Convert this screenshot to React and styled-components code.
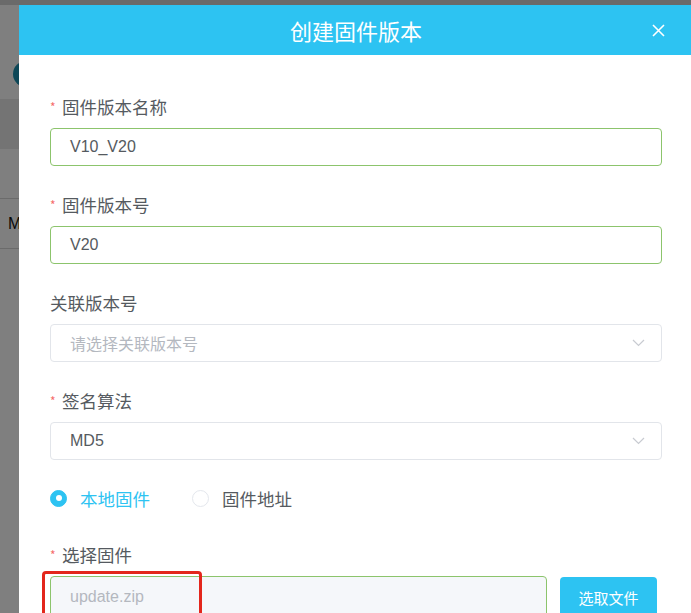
import React from "react";
import styled, { createGlobalStyle } from "styled-components";

const color = {
  blue: "#2dc3f2",
  text: "#555a60",
  muted: "#c0c4cc",
  green: "#8cc46c",
  line: "#e2e5ea",
  red: "#f56c6c",
};

const GlobalStyle = createGlobalStyle`
  html, body {
    margin: 0;
    padding: 0;
    overflow: hidden;
  }
  body {
    font-family: "Liberation Sans", "Noto Sans CJK SC", sans-serif;
  }
`;

const Page = styled.div`
  position: relative;
  width: 691px;
  height: 613px;
  overflow: hidden;
  background: #fff;
`;

/* the list page behind the dialog */
const BgTop = styled.div`
  height: 5px;
  background: #d4d4d4;
`;

const BgToolbar = styled.div`
  height: 50px;
  margin-top: 43px;
  border-top: 1px solid #ffffff;
  display: flex;
  align-items: center;
  padding-left: 13px;
`;

const BgAvatar = styled.div`
  width: 26px;
  height: 26px;
  border-radius: 50%;
  background: #1a8fae;
`;

const BgTableHead = styled.div`
  height: 50px;
  background: #e8e8e8;
`;

const BgRow = styled.div`
  height: 49px;
  border-bottom: 1px solid #d6d6d6;
  display: flex;
  align-items: center;
  padding-left: 8px;
  font-size: 16px;
  color: #111;
`;

const Overlay = styled.div`
  position: absolute;
  inset: 0;
  background: rgba(0, 0, 0, 0.5);
`;

const Modal = styled.div`
  position: absolute;
  left: 19px;
  top: 5px;
  width: 674px;
  height: 640px;
  background: #fff;
  font-family: "Liberation Sans", "Noto Sans CJK SC", sans-serif;
`;

const Header = styled.div`
  position: relative;
  height: 50px;
  background: ${color.blue};
  display: flex;
  align-items: center;
  justify-content: center;
`;

const Title = styled.h3`
  margin: 0;
  font-size: 22px;
  font-weight: 400;
  color: #fff;
  font-family: "Noto Sans CJK SC", sans-serif;
`;

const CloseButton = styled.button`
  position: absolute;
  right: 27px;
  top: 17px;
  width: 16px;
  height: 16px;
  padding: 0;
  border: 0;
  background: transparent;
  display: flex;
  align-items: center;
  justify-content: center;
  cursor: pointer;
`;

const Body = styled.div`
  padding: 42px 31px 0;
`;

const FormItem = styled.div`
  margin-bottom: 29px;
`;

const Label = styled.div`
  height: 20px;
  line-height: 20px;
  margin-bottom: 11px;
  font-size: 17.5px;
  color: ${color.text};
  font-family: "Noto Sans CJK SC", sans-serif;
  display: flex;
  align-items: center;
`;

const Star = styled.span`
  color: ${color.red};
  font-size: 12px;
  width: 12px;
  margin-top: -1px;
`;

const Field = styled.div`
  position: relative;
  box-sizing: border-box;
  height: ${(p) => p.h || 38}px;
  border: 1px solid ${(p) => (p.valid ? color.green : color.line)};
  border-radius: 4px;
  background: ${(p) => (p.disabled ? "#f5f7fa" : "#fff")};
  display: flex;
  align-items: center;
  padding: 0 19px;
  font-size: 16px;
  color: ${(p) => (p.placeholder ? "#b4b8bf" : color.text)};
  font-family: "Liberation Sans", "Noto Sans CJK SC", sans-serif;
  flex: ${(p) => (p.grow ? 1 : "none")};
`;

const Chevron = styled.svg`
  position: absolute;
  right: 16px;
  top: 50%;
  margin-top: -4px;
`;

const RadioRow = styled.div`
  height: 20px;
  margin: -1px 0 37px;
  display: flex;
  align-items: center;
  gap: 12px;
`;

const Radio = styled.label`
  display: flex;
  align-items: center;
  gap: 13px;
  font-size: 17.5px;
  color: ${(p) => (p.checked ? color.blue : color.text)};
  font-family: "Noto Sans CJK SC", sans-serif;
  margin-right: 30px;
`;

const Dot = styled.span`
  box-sizing: border-box;
  width: 17px;
  height: 17px;
  border-radius: 50%;
  border: 1px solid ${(p) => (p.checked ? color.blue : "#e4e7ed")};
  background: ${(p) => (p.checked ? color.blue : "#fff")};
  display: flex;
  align-items: center;
  justify-content: center;
  &::after {
    content: "";
    width: 6px;
    height: 6px;
    border-radius: 50%;
    background: #fff;
    display: ${(p) => (p.checked ? "block" : "none")};
  }
`;

const FileRow = styled.div`
  position: relative;
  display: flex;
  gap: 13px;
  width: 607px;
`;

const PickButton = styled.button`
  width: 97px;
  height: 40px;
  margin-top: 1px;
  border: 0;
  border-radius: 4px;
  background: ${color.blue};
  color: #fff;
  font-size: 15px;
  font-family: "Noto Sans CJK SC", sans-serif;
  cursor: pointer;
`;

const Highlight = styled.div`
  position: absolute;
  left: -8px;
  top: -5px;
  width: 160px;
  height: 50px;
  box-sizing: border-box;
  border: 3px solid #e3261c;
  border-radius: 4px;
  pointer-events: none;
`;

const ChevronIcon = () => (
  <Chevron width="13" height="8" viewBox="0 0 13 8">
    <path d="M1 1l5.5 5.5L12 1" fill="none" stroke="#c8cbd1" strokeWidth="1.2" />
  </Chevron>
);

const Required = ({ children, required }) => (
  <Label>
    {required && <Star>*</Star>}
    {children}
  </Label>
);

export default function App() {
  return (
    <>
      <GlobalStyle />
      <Page>
        <BgTop />
        <BgToolbar>
          <BgAvatar />
        </BgToolbar>
        <BgTableHead />
        <BgRow />
        <BgRow>MD5</BgRow>
        <Overlay />

        <Modal>
          <Header>
            <Title>创建固件版本</Title>
            <CloseButton aria-label="close">
              <svg width="13" height="13" viewBox="0 0 13 13">
                <path d="M1 1l11 11M12 1L1 12" stroke="#fff" strokeWidth="1.6" />
              </svg>
            </CloseButton>
          </Header>
          <Body>
            <FormItem>
              <Required required>固件版本名称</Required>
              <Field valid>V10_V20</Field>
            </FormItem>
            <FormItem>
              <Required required>固件版本号</Required>
              <Field valid>V20</Field>
            </FormItem>
            <FormItem>
              <Required>关联版本号</Required>
              <Field placeholder="true">
                请选择关联版本号
                <ChevronIcon />
              </Field>
            </FormItem>
            <FormItem>
              <Required required>签名算法</Required>
              <Field>
                MD5
                <ChevronIcon />
              </Field>
            </FormItem>
            <RadioRow>
              <Radio checked>
                <Dot checked />
                本地固件
              </Radio>
              <Radio>
                <Dot />
                固件地址
              </Radio>
            </RadioRow>
            <Label>
              <Star>*</Star>选择固件
            </Label>
            <FileRow>
              <Field valid disabled placeholder="true" grow h={42}>
                update.zip
              </Field>
              <PickButton>选取文件</PickButton>
              <Highlight />
            </FileRow>
          </Body>
        </Modal>
      </Page>
    </>
  );
}
